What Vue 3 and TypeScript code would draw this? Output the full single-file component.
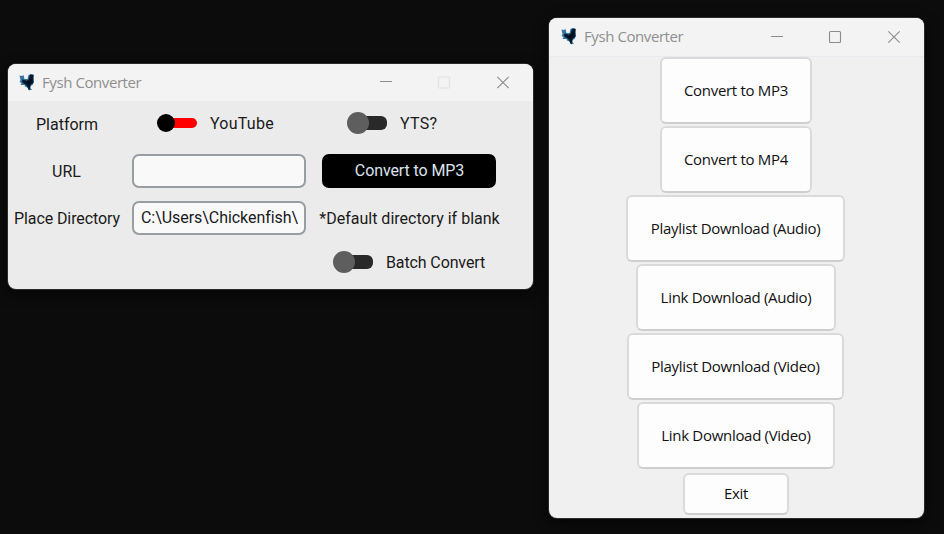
<script setup lang="ts">
import { ref } from 'vue'

interface MenuButton {
  label: string
  size: string
}

const directory = ref('C:\\Users\\Chickenfish\\')
const url = ref('')

const menu: MenuButton[] = [
  { label: 'Convert to MP3', size: 'w-convert' },
  { label: 'Convert to MP4', size: 'w-convert' },
  { label: 'Playlist Download (Audio)', size: 'w-playlist-audio' },
  { label: 'Link Download (Audio)', size: 'w-link-audio' },
  { label: 'Playlist Download (Video)', size: 'w-playlist-video' },
  { label: 'Link Download (Video)', size: 'w-link-video' },
  { label: 'Exit', size: 'w-exit' },
]
</script>

<template>
  <main class="desktop">
    <section class="window converter">
      <header class="titlebar">
        <svg class="logo" viewBox="0 0 16 17">
          <path class="logo-edge" d="M.5 1.5 3 2 4.5 1 5.5 5 8.5 5 9.5 1 12 0 15 1 14.5 4 15 8 13.5 11 11.5 12 11.5 14 13 16 9.5 16 8.5 13.5 6 12.5 5.5 11 1.5 11 2.5 9 .5 8 1.5 6Z" />
          <path class="logo-body" d="M11.5 1.5 13.5 1.5 13.5 8.5 11 10.5 10 14.5 8.5 11.5 6.5 9.5 4 8 4 6.5 8 7.5 10.5 5.5Z" />
        </svg>
        <h1 class="title">Fysh Converter</h1>
        <svg class="controls" viewBox="0 0 130 14">
          <path d="M0 5.5H12" />
          <rect class="disabled" x="58.5" y="1" width="11" height="11" rx="1" />
          <path d="M117.3 .8 128.7 12.2M128.7 .8 117.3 12.2" />
        </svg>
      </header>
      <div class="form">
        <label class="caption">Platform</label>
        <div class="switch platform">
          <svg class="toggle" viewBox="0 0 40 22">
            <rect class="red" x="5" y="6" width="35" height="10" rx="5" />
            <circle cx="9" cy="11" r="9" />
          </svg>
          <span class="youtube">YouTube</span>
        </div>
        <div class="switch yts">
          <svg class="toggle" viewBox="0 0 40 22">
            <rect class="track" x="5" y="4" width="35" height="14" rx="6" />
            <circle class="knob" cx="11" cy="11" r="11" />
          </svg>
          <span class="youtube">YTS?</span>
        </div>

        <label class="caption url">URL</label>
        <input v-model="url" class="field" type="text" />
        <button class="convert">Convert to MP3</button>

        <label class="caption place">Place Directory</label>
        <input v-model="directory" class="field directory" type="text" />
        <span class="caption hint">*Default directory if blank</span>

        <div class="switch batch">
          <svg class="toggle" viewBox="0 0 40 22">
            <rect class="track" x="5" y="4" width="35" height="14" rx="6" />
            <circle class="knob" cx="11" cy="11" r="11" />
          </svg>
          <span class="batch-label">Batch Convert</span>
        </div>
      </div>
    </section>

    <section class="window launcher">
      <header class="titlebar">
        <svg class="logo" viewBox="0 0 16 17">
          <path class="logo-edge" d="M.5 1.5 3 2 4.5 1 5.5 5 8.5 5 9.5 1 12 0 15 1 14.5 4 15 8 13.5 11 11.5 12 11.5 14 13 16 9.5 16 8.5 13.5 6 12.5 5.5 11 1.5 11 2.5 9 .5 8 1.5 6Z" />
          <path class="logo-body" d="M11.5 1.5 13.5 1.5 13.5 8.5 11 10.5 10 14.5 8.5 11.5 6.5 9.5 4 8 4 6.5 8 7.5 10.5 5.5Z" />
        </svg>
        <h1 class="title">Fysh Converter</h1>
        <svg class="controls" viewBox="0 0 130 14">
          <path d="M0 6.5H12" />
          <rect x="58.5" y="1.5" width="11" height="11" rx="1" />
          <path d="M117.3 1.3 128.7 12.7M128.7 1.3 117.3 12.7" />
        </svg>
      </header>
      <nav class="menu">
        <button v-for="item in menu" :key="item.label" class="item" :class="item.size">
          {{ item.label }}
        </button>
      </nav>
    </section>
  </main>
</template>

<style>
body {
  background: #0c0c0c;
  overflow: hidden;
}
</style>

<style scoped>
.desktop {
  display: flex;
  align-items: flex-start;
  gap: 16px;
  box-sizing: border-box;
  width: 944px;
  height: 534px;
  padding: 18px 0 0 8px;
  background: #0c0c0c;
}

.window {
  border-radius: 8px;
  overflow: hidden;
  box-shadow: 0 0 0 1px #2b2b2b, 0 4px 14px #050505;
}

.converter {
  width: 525px;
  height: 225px;
  margin-top: 46px;
  background: #ebebeb;
  font-family: Roboto, sans-serif;
  font-size: 16px;
  color: #1a1a1a;
}

.launcher {
  width: 375px;
  height: 500px;
  background: #f0f0f0;
}

.titlebar {
  display: flex;
  align-items: center;
  box-sizing: border-box;
  height: 37px;
  padding: 0 23px 0 11px;
  background: #f3f3f3;
}

.launcher .titlebar {
  height: 39px;
  padding-left: 12px;
  border-bottom: 1px solid #e8ecf1;
}

.logo {
  width: 16px;
  height: 17px;
}

.launcher .logo {
  margin-bottom: 2px;
}

.logo-edge {
  fill: #34749e;
}

.logo-body {
  fill: #020e1c;
  stroke: #04192b;
  stroke-width: 1.6;
}

.title {
  flex: 1;
  margin: 0 0 1px 7px;
  font: 400 15px/20px "Open Sans", sans-serif;
  letter-spacing: -0.42px;
  color: #8f8f8f;
}

.launcher .title {
  margin-bottom: 2px;
}

.controls {
  width: 130px;
  height: 14px;
  fill: none;
  stroke: #8b8b8b;
  stroke-width: 1.1;
}

.controls .disabled {
  stroke: #e1e1e1;
}

.form {
  display: grid;
  grid-template-columns: 118px 186px 195px;
  grid-template-rows: 46px 47px 47px 42px;
  align-items: center;
  justify-items: center;
}

.caption {
  white-space: nowrap;
}

.url {
  padding: 2px 1px 0 0;
}

.place {
  padding-top: 2px;
  letter-spacing: -0.1px;
}

.hint {
  padding-top: 2px;
}

.switch {
  display: flex;
  align-items: center;
  gap: 13px;
  justify-self: start;
  height: 22px;
  margin-bottom: 2px;
}

.youtube {
  letter-spacing: 0.25px;
}

.batch-label {
  letter-spacing: -0.12px;
}

.platform {
  margin-left: 31px;
}

.yts {
  margin-left: 35px;
}

.batch {
  grid-column: 3;
  margin: 0 0 0 21px;
}

.toggle {
  width: 40px;
  height: 22px;
}

.red {
  fill: #ff0000;
}

.track {
  fill: #292929;
}

.knob {
  fill: #5e5e5e;
}

.field {
  box-sizing: border-box;
  width: 174px;
  height: 34px;
  padding: 0 6px 2px 7px;
  border: 2px solid #979da2;
  border-radius: 7px;
  background: #f9f9fa;
  font: inherit;
  color: inherit;
  outline: none;
}

.directory {
  padding-bottom: 0;
  letter-spacing: -0.05px;
}

.convert {
  width: 174px;
  height: 34px;
  margin-right: 1px;
  padding: 0 0 0 1px;
  border: 0;
  border-radius: 7px;
  background: #000;
  font: inherit;
  letter-spacing: -0.1px;
  color: #dce4ee;
}

.menu {
  display: flex;
  flex-direction: column;
  align-items: center;
  gap: 2px;
  padding-right: 1px;
}

.item {
  box-sizing: border-box;
  height: 67px;
  padding: 0 0 2px;
  border: 2px solid #dadada;
  border-bottom-color: #cecece;
  border-radius: 6px;
  background: #fdfdfd;
  font: 400 15px/20px "Open Sans", sans-serif;
  letter-spacing: -0.3px;
  color: #111;
  white-space: nowrap;
}

.w-convert {
  width: 152px;
}

.w-playlist-audio {
  width: 219px;
  margin-right: 1px;
}

.w-link-audio {
  width: 200px;
}

.w-playlist-video {
  width: 217px;
  margin-right: 1px;
}

.w-link-video {
  width: 198px;
}

.w-exit {
  width: 106px;
  height: 42px;
  margin-top: 2px;
}
</style>
